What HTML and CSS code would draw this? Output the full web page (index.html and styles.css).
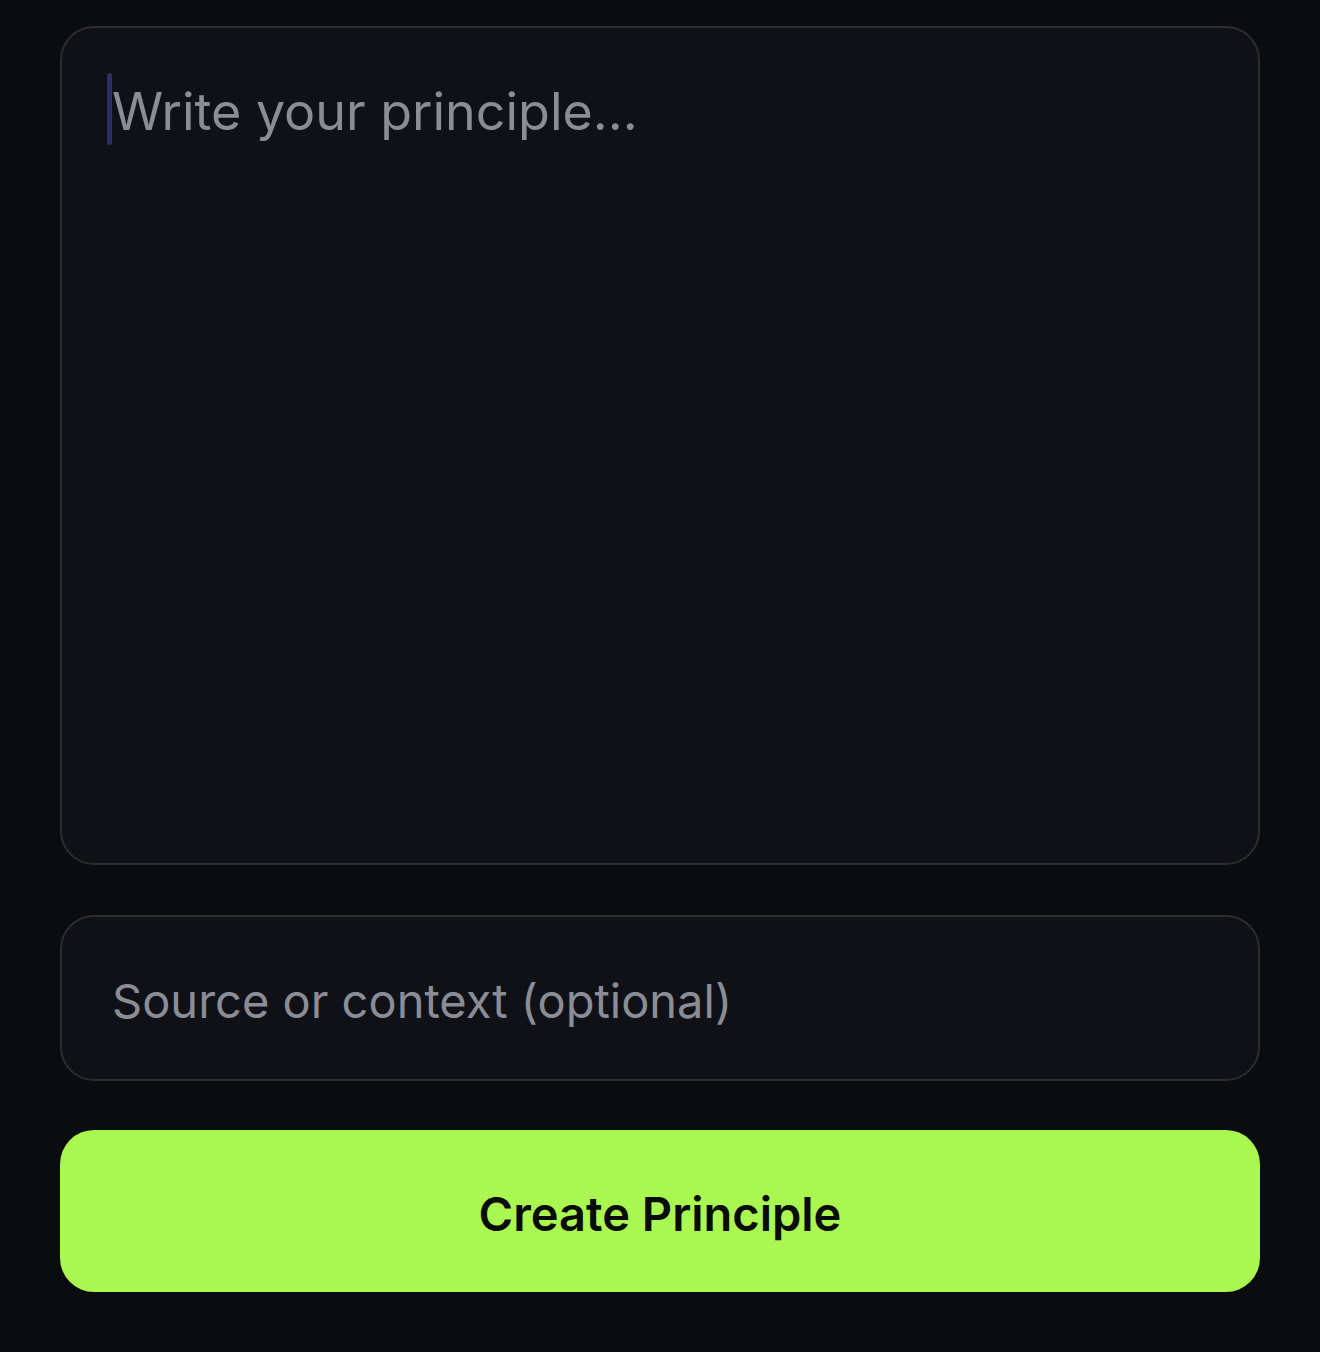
FILE: index.html
```html
<!DOCTYPE html>
<html lang="en">
<head>
<meta charset="utf-8">
<title>Create Principle</title>
<link rel="stylesheet" href="styles.css">
</head>
<body>
<main class="form">
  <div class="field field-area">
    <div class="line"><span class="caret"></span><span class="placeholder">Write your principle...</span></div>
  </div>
  <div class="field field-input">
    <span class="placeholder placeholder-small">Source or context (optional)</span>
  </div>
  <button class="submit" type="button">Create Principle</button>
</main>
</body>
</html>
```
FILE: styles.css
```css
html, body {
  margin: 0;
  padding: 0;
  background: #0b0c10;
}
body {
  font-family: Inter, "Noto Sans", sans-serif;
  height: 1352px;
}
.form {
  display: flex;
  flex-direction: column;
  padding: 26px 60px 0 60px;
}
.field {
  box-sizing: border-box;
  background: #101116;
  border: 2.5px solid #2b2d32;
  border-radius: 34px;
}
.field-area {
  height: 839px;
  padding: 45px 45px;
}
.line {
  display: flex;
  align-items: center;
  height: 72px;
}
.caret {
  width: 5px;
  height: 72px;
  border-radius: 3px;
  background: #2a3162;
  flex: none;
}
.placeholder {
  color: #8a8d96;
  font-size: 52px;
  font-weight: 400;
  position: relative;
  top: 2px;
}
.field-input {
  margin-top: 50px;
  height: 166px;
  display: flex;
  align-items: center;
  padding: 0 50px;
}
.placeholder-small {
  font-size: 47px;
}
.submit {
  margin-top: 49px;
  height: 162px;
  border: none;
  border-radius: 34px;
  background: #abf751;
  color: #0a0c08;
  font-family: Inter, "Noto Sans", sans-serif;
  font-size: 47px;
  font-weight: 600;
  padding: 4px 0 0 0;
  cursor: pointer;
}
```
